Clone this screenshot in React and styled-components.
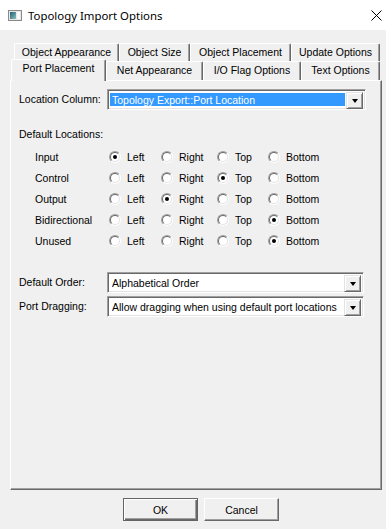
import React from "react";
import styled, { createGlobalStyle } from "styled-components";

const GlobalStyle = createGlobalStyle`
  html, body {
    margin: 0;
    padding: 0;
    background: #f0f0f0;
  }
  body {
    font-family: "Liberation Sans", Arial, sans-serif;
    font-size: 10.5px;
    color: #000;
  }
`;

const Window = styled.div`
  width: 386px;
  height: 529px;
  display: flex;
  flex-direction: column;
  background: #f0f0f0;
  overflow: hidden;
`;

const TitleBar = styled.div`
  height: 30px;
  flex: none;
  background: #fff;
  display: flex;
  align-items: center;
  padding: 0 4px 0 8px;
`;

const Title = styled.span`
  flex: 1;
  margin-left: 6px;
  font-family: "Noto Sans", "Open Sans", sans-serif;
  font-size: 11.4px;
`;

const Body = styled.div`
  padding: 13px 0 0 10px;
`;

const TabRow = styled.div`
  display: flex;
  align-items: flex-end;
  height: ${(p) => p.$h}px;
  padding-left: ${(p) => p.$indent}px;
`;

const Tab = styled.div`
  box-sizing: border-box;
  width: ${(p) => p.$w}px;
  height: ${(p) => (p.$active ? 22 : p.$h)}px;
  margin-bottom: ${(p) => (p.$active ? -1 : 0)}px;
  position: ${(p) => (p.$active ? "relative" : "static")};
  z-index: ${(p) => (p.$active ? 1 : "auto")};
  background: #f0f0f0;
  border-top: 1px solid #fff;
  border-left: 1px solid #fff;
  border-right: 1px solid #696969;
  box-shadow: inset -1px 0 #a0a0a0;
  border-radius: 2px 2px 0 0;
  text-align: center;
  padding-top: 2px;
  line-height: 13px;
  white-space: nowrap;
`;

const Panel = styled.div`
  box-sizing: border-box;
  width: 372px;
  height: 410px;
  border-top: 1px solid #fff;
  border-left: 1px solid #fff;
  border-right: 1px solid #696969;
  border-bottom: 1px solid #696969;
  box-shadow: inset -1px -1px #a0a0a0;
  padding: 8px 0 0 8px;
`;

const FieldRow = styled.div`
  display: flex;
  align-items: center;
  margin-top: ${(p) => p.$mt || 0}px;
`;

const FieldLabel = styled.span`
  width: 88px;
  line-height: 13px;
`;

const Combo = styled.div`
  box-sizing: border-box;
  width: ${(p) => p.$w}px;
  height: 21px;
  border: 1px solid;
  border-color: #a0a0a0 #fff #fff #a0a0a0;
  box-shadow: inset 1px 1px #696969, inset -1px -1px #e3e3e3;
  background: #fff;
  display: flex;
  padding: 2px;
`;

const ComboValue = styled.div`
  flex: 1;
  margin: 1px 1px 1px 0;
  padding-left: 2px;
  display: flex;
  align-items: center;
  background: ${(p) => (p.$selected ? "#3399ff" : "#fff")};
  color: ${(p) => (p.$selected ? "#fff" : "#000")};
  white-space: nowrap;
  overflow: hidden;
`;

const DropButton = styled.div`
  box-sizing: border-box;
  width: 17px;
  height: 17px;
  background: #f0f0f0;
  border: 1px solid;
  border-color: #e3e3e3 #696969 #696969 #e3e3e3;
  box-shadow: inset 1px 1px #fff, inset -1px -1px #a0a0a0;
  display: flex;
  align-items: center;
  justify-content: center;
`;

const Arrow = styled.span`
  width: 0;
  height: 0;
  border-left: 3.5px solid transparent;
  border-right: 3.5px solid transparent;
  border-top: 4px solid #000;
`;

const SectionLabel = styled.div`
  margin-top: 18px;
  line-height: 13px;
`;

const RadioGroup = styled.div`
  margin-top: 5px;
  padding-left: 16px;
`;

const RadioRow = styled.div`
  display: grid;
  grid-template-columns: 74px 52px 56px 51px auto;
  align-items: center;
  height: 21px;
`;

const Option = styled.label`
  display: flex;
  align-items: center;
  gap: 6px;
`;

const RadioOuter = styled.span`
  box-sizing: border-box;
  width: 12px;
  height: 12px;
  border-radius: 50%;
  border: 1px solid;
  border-color: #a0a0a0 #fff #fff #a0a0a0;
  display: flex;
`;

const RadioInner = styled.span`
  box-sizing: border-box;
  flex: 1;
  border-radius: 50%;
  border: 1px solid;
  border-color: #696969 #e3e3e3 #e3e3e3 #696969;
  background: #fff;
  display: flex;
  align-items: center;
  justify-content: center;
`;

const Dot = styled.span`
  width: 4px;
  height: 4px;
  border-radius: 50%;
  background: #000;
`;

const ButtonBar = styled.div`
  display: flex;
  justify-content: center;
  gap: 6px;
  padding-left: 6px;
  margin-top: 8px;
`;

const Button = styled.button`
  box-sizing: border-box;
  width: 75px;
  height: 23px;
  padding: 0;
  font-family: "Liberation Sans", Arial, sans-serif;
  font-size: 10.5px;
  color: #000;
  background: #f0f0f0;
  border: 1px solid;
  border-color: ${(p) =>
    p.$default ? "#646464" : "#fff #696969 #696969 #fff"};
  box-shadow: ${(p) =>
    p.$default
      ? "inset 1px 1px #fff, inset -1px -1px #696969, inset -2px -2px #a0a0a0"
      : "inset -1px -1px #a0a0a0"};
`;

const WindowIcon = () => (
  <svg width="14" height="11" viewBox="0 0 14 11">
    <defs>
      <linearGradient id="g" x1="0" y1="0" x2="1" y2="1">
        <stop offset="0" stopColor="#1f5f7a" />
        <stop offset="1" stopColor="#8cc0b8" />
      </linearGradient>
    </defs>
    <rect x="0.5" y="0.5" width="13" height="10" fill="#e8e8e8" stroke="#8a8a8a" />
    <rect x="2" y="2" width="6" height="7" fill="url(#g)" />
    <rect x="9" y="2" width="3" height="7" fill="#fafafa" />
  </svg>
);

const CloseIcon = () => (
  <svg width="11" height="11" viewBox="0 0 11 11">
    <path d="M0.5 0.5 L10.5 10.5 M10.5 0.5 L0.5 10.5" stroke="#000" strokeWidth="1" />
  </svg>
);

const Radio = ({ checked, label }) => (
  <Option>
    <RadioOuter>
      <RadioInner>{checked && <Dot />}</RadioInner>
    </RadioOuter>
    {label}
  </Option>
);

const sides = ["Left", "Right", "Top", "Bottom"];
const ports = [
  ["Input", "Left"],
  ["Control", "Top"],
  ["Output", "Right"],
  ["Bidirectional", "Bottom"],
  ["Unused", "Bottom"],
];

const backTabs = [
  ["Object Appearance", 105],
  ["Object Size", 71],
  ["Object Placement", 101],
  ["Update Options", 89],
];
const frontTabs = [
  ["Port Placement", 95],
  ["Net Appearance", 97],
  ["I/O Flag Options", 98],
  ["Text Options", 79],
];

export default function App() {
  return (
    <>
      <GlobalStyle />
      <Window>
        <TitleBar>
          <WindowIcon />
          <Title>Topology Import Options</Title>
          <CloseIcon />
        </TitleBar>
        <Body>
          <TabRow $h={18} $indent={4}>
            {backTabs.map(([t, w]) => (
              <Tab key={t} $w={w} $h={18}>
                {t}
              </Tab>
            ))}
          </TabRow>
          <TabRow $h={19} $indent={1}>
            {frontTabs.map(([t, w], i) => (
              <Tab key={t} $w={w} $h={19} $active={i === 0}>
                {t}
              </Tab>
            ))}
          </TabRow>
          <Panel>
            <FieldRow>
              <FieldLabel>Location Column:</FieldLabel>
              <Combo $w={259}>
                <ComboValue $selected>Topology Export::Port Location</ComboValue>
                <DropButton>
                  <Arrow />
                </DropButton>
              </Combo>
            </FieldRow>
            <SectionLabel>Default Locations:</SectionLabel>
            <RadioGroup>
              {ports.map(([name, sel]) => (
                <RadioRow key={name}>
                  <span>{name}</span>
                  {sides.map((s) => (
                    <Radio key={s} label={s} checked={s === sel} />
                  ))}
                </RadioRow>
              ))}
            </RadioGroup>
            <FieldRow $mt={21}>
              <FieldLabel>Default Order:</FieldLabel>
              <Combo $w={257}>
                <ComboValue>Alphabetical Order</ComboValue>
                <DropButton>
                  <Arrow />
                </DropButton>
              </Combo>
            </FieldRow>
            <FieldRow $mt={3}>
              <FieldLabel>Port Dragging:</FieldLabel>
              <Combo $w={257}>
                <ComboValue>Allow dragging when using default port locations</ComboValue>
                <DropButton>
                  <Arrow />
                </DropButton>
              </Combo>
            </FieldRow>
          </Panel>
          <ButtonBar>
            <Button $default>OK</Button>
            <Button>Cancel</Button>
          </ButtonBar>
        </Body>
      </Window>
    </>
  );
}
